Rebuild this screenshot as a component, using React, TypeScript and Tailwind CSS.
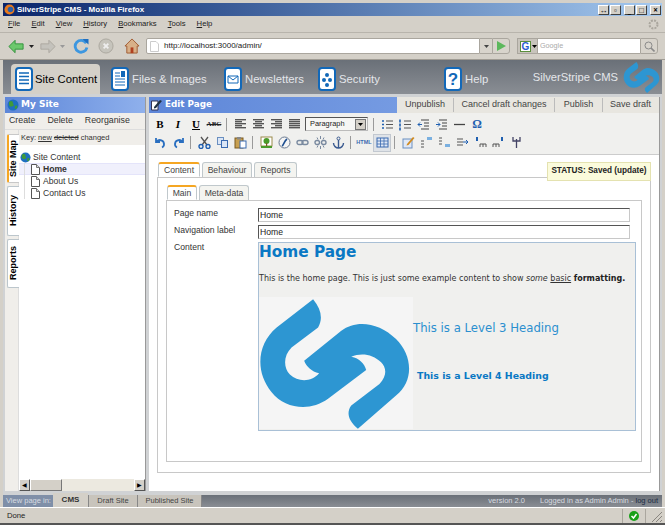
import React from "react";

const chrome = { fontFamily: '"Noto Sans", "Liberation Sans", sans-serif' };
const arial = { fontFamily: '"Liberation Sans", Arial, sans-serif' };
const dejavu = { fontFamily: '"DejaVu Sans", Verdana, sans-serif' };

const LOGO =
  "M190 45C215 75 220 105 205 130L125 190C100 215 100 250 120 272C145 295 185 295 208 268C185 262 170 248 163 230L275 140C320 105 390 115 440 165C490 215 495 290 440 335L325 435C295 410 290 385 305 365L390 300C415 275 410 250 395 235C370 210 335 205 305 218C330 222 345 240 350 258L235 345C180 385 105 375 65 325C15 265 20 180 80 130Z";

const Logo = ({ w, h, box }: { w: number; h: number; box: string }) => (
  <svg width={w} height={h} viewBox={box} className="shrink-0">
    <path d={LOGO} fill="#2d96d2" />
  </svg>
);

const WinBtn = ({ children }: { children: React.ReactNode }) => (
  <div className="w-[11px] h-[10px] bg-[#d4d0c8] border border-t-white border-l-white border-r-[#404040] border-b-[#404040] flex items-center justify-center text-[8px] leading-none font-bold text-black">
    {children}
  </div>
);

const DocIcon = ({ lines }: { lines: React.ReactNode }) => (
  <svg width="18" height="24" viewBox="0 0 18 24" className="shrink-0">
    <rect x="1" y="1" width="16" height="22" rx="3" fill="#fff" stroke="#1268b8" strokeWidth="2" />
    {lines}
  </svg>
);

const TopTab = ({ label, icon, w }: { label: string; icon: React.ReactNode; w: string }) => (
  <div className={`flex items-center gap-[3px] h-[30px] pl-[11px] text-[11.3px] text-[#e4e6ea] whitespace-nowrap ${w}`} style={arial}>
    {icon}
    <span>{label}</span>
  </div>
);

const SideTab = ({ label, on, h }: { label: string; on?: boolean; h: string }) => (
  <div
    className={`w-[12px] ${h} mb-[3px] flex items-center justify-center rounded-l-[2px] border border-r-0 ${
      on ? "bg-white border-l-2 border-l-[#f5a623] border-[#c8c8c8]" : "bg-white border-[#bcc6cc]"
    }`}
  >
    <span className="[writing-mode:vertical-rl] rotate-180 text-[9px] font-bold text-black whitespace-nowrap" style={arial}>
      {label}
    </span>
  </div>
);

const PageIcon = () => (
  <svg width="9" height="11" viewBox="0 0 9 11" className="shrink-0">
    <path d="M.5.5H5.5L8.5 3.5V10.5H.5Z" fill="#fff" stroke="#555" />
    <path d="M5.5.5V3.5H8.5" fill="#ddd" stroke="#777" />
  </svg>
);

const TreeRow = ({ label, on }: { label: string; on?: boolean }) => (
  <div className={`h-[12px] flex items-center pl-[5px] ${on ? "bg-[#f0f0fc] border-y border-[#e4e4fa]" : ""}`}>
    <span className="w-[1px] h-[12px] bg-[#ddd]" />
    <span className="w-[15px] flex justify-end">
      <PageIcon />
    </span>
    <span className={`ml-[3px] text-[8.6px] text-[#333] ${on ? "font-bold" : ""}`} style={arial}>
      {label}
    </span>
  </div>
);

const PanelHeader = ({ icon, label }: { icon: React.ReactNode; label: string }) => (
  <div className="h-[16px] flex items-center gap-[2px] pl-[2px] bg-gradient-to-r from-[#5d86d8] to-[#8fb0ec] text-white text-[9px] font-bold" style={dejavu}>
    {icon}
    <span>{label}</span>
  </div>
);

const Globe = ({ size = 11 }: { size?: number }) => (
  <svg width={size} height={size} viewBox="0 0 12 12" className="shrink-0">
    <circle cx="6" cy="6" r="5.5" fill="#1f6fc0" />
    <path d="M2 3C4 1 6 2 6 4S8 6 6 7 3 8 2 6ZM8 7C10 6 11 7 10 9S7 10 8 7Z" fill="#3f9a3a" />
  </svg>
);

const ToolBtn = ({ children, on }: { children: React.ReactNode; on?: boolean }) => (
  <div className={`w-[18px] h-[18px] shrink-0 flex items-center justify-center ${on ? "bg-[#dfe3e8] border border-[#c2c8d0]" : ""}`}>
    {children}
  </div>
);

const Sep = () => <div className="w-[1px] h-[13px] bg-[#9a9a9a] ml-[3px] mr-[4px] shrink-0" />;

const Lines = ({ kind }: { kind: "l" | "c" | "r" | "f" }) => {
  const rows = [0, 1, 2, 3, 4];
  return (
    <svg width="11" height="10" viewBox="0 0 11 10">
      {rows.map((i) => {
        const short = i % 2 === 1 && kind !== "f";
        const w = short ? 7 : 11;
        const x = kind === "r" ? 11 - w : kind === "c" ? (11 - w) / 2 : 0;
        return <rect key={i} x={x} y={i * 2} width={w} height="1.4" fill="#555" />;
      })}
    </svg>
  );
};

const Ic = ({ children }: { children: React.ReactNode }) => (
  <svg width="13" height="13" viewBox="0 0 13 13" fill="none">
    {children}
  </svg>
);

const FormRow = ({ label, value }: { label: string; value: string }) => (
  <div className="flex h-[14px] mb-[3px]">
    <div className="w-[84px] text-[8.6px] text-[#333] leading-[11px]" style={arial}>
      {label}
    </div>
    <div className="w-[372px] h-[14px] bg-white border border-[#c8c8c8] border-t-[#555] border-l-[#555] text-[8.6px] text-[#222] leading-[13px] pl-[1px]" style={arial}>
      {value}
    </div>
  </div>
);

const MainTab = ({ label, w, on, h }: { label: string; w: string; on?: boolean; h: string }) => (
  <div
    className={`${w} ${h} mr-[2px] flex items-center justify-center text-[8.6px] text-[#444] rounded-t-[3px] border border-[#c0c8cc] ${
      on ? "bg-white border-t-2 border-t-[#f5a623] border-b-white -mb-[1px]" : "bg-[#f4f4f0] border-b-0"
    }`}
    style={arial}
  >
    {label}
  </div>
);

const Caret = ({ color }: { color: string }) => (
  <svg width="5" height="3" viewBox="0 0 5 3" className="shrink-0">
    <path d="M0 0h5L2.5 3Z" fill={color} />
  </svg>
);

export default function App() {
  return (
    <div className="w-[665px] h-[525px] flex flex-col bg-[#d4d0c8] overflow-hidden border-b-2 border-[#555]" style={chrome}>
      {/* title bar */}
      <div className="mt-[3px] mx-[3px] h-[13px] shrink-0 flex items-center bg-gradient-to-r from-[#0a246a] to-[#a6caf0] pl-[1px] pr-[1px] gap-[2px]">
        <svg width="11" height="11" viewBox="0 0 12 12" className="shrink-0">
          <circle cx="6" cy="6" r="5.5" fill="#e8791c" />
          <circle cx="7" cy="6" r="3" fill="#2d5fa8" />
        </svg>
        <span className="text-[8px] font-bold text-white whitespace-nowrap" style={arial}>SilverStripe CMS - Mozilla Firefox</span>
        <div className="ml-auto flex gap-[1px]">
          <WinBtn>↔</WinBtn>
          <WinBtn>▫</WinBtn>
          <div className="w-[1px]" />
          <WinBtn>_</WinBtn>
          <WinBtn>□</WinBtn>
          <div className="w-[1px]" />
          <WinBtn>×</WinBtn>
        </div>
      </div>

      {/* menu */}
      <div className="h-[17px] shrink-0 flex items-center pl-[8px] pr-[6px] gap-[11px] text-[7.7px] text-[#222] border-b border-[#b8b4ac]" style={arial}>
        {["File", "Edit", "View", "History", "Bookmarks", "Tools", "Help"].map((m) => (
          <span key={m}>
            <span className="underline">{m[0]}</span>
            {m.slice(1)}
          </span>
        ))}
        <svg width="11" height="11" viewBox="0 0 11 11" className="ml-auto">
          <circle cx="5.5" cy="5.5" r="4" fill="none" stroke="#aaa69e" strokeWidth="2" strokeDasharray="2 1.15" />
        </svg>
      </div>

      {/* nav toolbar */}
      <div className="h-[27px] shrink-0 flex items-center pl-[8px] border-b border-[#a09c94]">
        <svg width="16" height="15" viewBox="0 0 18 16" className="shrink-0">
          <path d="M8 1 1 8l7 7v-4h9V5H8Z" fill="#6cc86c" stroke="#2f8f3a" />
        </svg>
        <span className="ml-[5px]"><Caret color="#222" /></span>
        <svg width="16" height="15" viewBox="0 0 18 16" className="ml-[6px] shrink-0">
          <path d="M10 1l7 7-7 7v-4H1V5h9Z" fill="#c4c2bc" stroke="#aaa69e" />
        </svg>
        <span className="ml-[4px]"><Caret color="#999" /></span>
        <svg width="16" height="16" viewBox="0 0 17 17" className="ml-[8px] shrink-0">
          <path d="M14 5.5A6.3 6.3 0 1 0 14.8 10" fill="none" stroke="#3d97e0" strokeWidth="3" />
          <path d="M10 1h6.5v6Z" fill="#1f6fc0" />
        </svg>
        <svg width="16" height="16" viewBox="0 0 17 17" className="ml-[9px] shrink-0">
          <circle cx="8.5" cy="8.5" r="7.5" fill="#c6c4bc" stroke="#aaa69e" />
          <path d="M6 6l5 5M11 6l-5 5" stroke="#eee" strokeWidth="2" />
        </svg>
        <svg width="16" height="16" viewBox="0 0 17 17" className="ml-[10px] shrink-0">
          <path d="M8.5 1 1 8.5h2V16h11V8.5h2Z" fill="#d8b088" stroke="#a05a30" />
          <rect x="7" y="10" width="3" height="6" fill="#b04020" />
        </svg>
        <div className="ml-[6px] w-[334px] h-[16px] flex items-center bg-white border border-[#aaa69e] rounded-l-[2px] pl-[3px] shrink-0">
          <svg width="9" height="11" viewBox="0 0 9 11" className="shrink-0">
            <path d="M.5.5H6L8.5 3V10.5H.5Z" fill="#fff" stroke="#ccc" />
          </svg>
          <span className="ml-[5px] text-[8px] text-[#222]" style={arial}>http://localhost:3000/admin/</span>
        </div>
        <div className="w-[12px] h-[16px] bg-[#d8d4cc] border-y border-[#aaa69e] flex items-center justify-center shrink-0"><Caret color="#444" /></div>
        <div className="w-[18px] h-[16px] bg-[#d8d4cc] border border-[#aaa69e] rounded-r-[3px] flex items-center justify-center shrink-0">
          <svg width="9" height="10" viewBox="0 0 9 10"><path d="M0 0 9 5 0 10Z" fill="#5cb85c" /></svg>
        </div>
        <div className="ml-[7px] w-[21px] h-[16px] bg-[#c8c4bc] border border-[#aaa69e] flex items-center pl-[2px] gap-[1px] shrink-0">
          <span className="w-[11px] h-[11px] bg-white border border-[#5a8f3c] text-[10px] leading-[10px] font-bold text-[#2a5ad0] text-center" style={arial}>G</span>
          <Caret color="#000" />
        </div>
        <div className="w-[102px] h-[16px] bg-white border-y border-[#aaa69e] text-[7.2px] text-[#aaa] leading-[14px] pl-[2px] shrink-0" style={arial}>Google</div>
        <div className="w-[18px] h-[16px] bg-[#d8d4cc] border border-[#aaa69e] rounded-r-[3px] flex items-center justify-center shrink-0">
          <svg width="11" height="11" viewBox="0 0 11 11" fill="none"><circle cx="4.5" cy="4.5" r="3.5" stroke="#8a8a8a" /><path d="M7 7l3.5 3.5" stroke="#8a8a8a" strokeWidth="1.6" /></svg>
        </div>
      </div>

      {/* cms page */}
      <div className="flex-1 min-h-0 flex flex-col mx-[3px] bg-[#d0d2d4]">
        {/* tabs */}
        <div className="h-[34px] shrink-0 flex items-end pl-[8px] pr-[2px] bg-gradient-to-b from-[#6a7078] to-[#8a8e94]">
          <div className="w-[89px] h-[30px] flex items-center gap-[2px] pl-[4px] bg-[#d4d0c8] rounded-t-[4px] text-[11.3px] text-black whitespace-nowrap" style={arial}>
            <DocIcon lines={<path d="M4 6h10M4 9.5h10M4 13h10M4 16.5h10" stroke="#1268b8" strokeWidth="1.4" />} />
            <span>Site Content</span>
          </div>
          <TopTab label="Files & Images" w="w-[113px]" icon={<DocIcon lines={<><path d="M4 6h5M4 9h5M4 12h10M4 15h10M4 18h10" stroke="#1268b8" /><rect x="10" y="4" width="4" height="6" fill="#1268b8" /></>} />} />
          <TopTab label="Newsletters" w="w-[94px]" icon={<DocIcon lines={<path d="M4 9h10v7H4ZM4 9l5 4 5-4" fill="none" stroke="#1268b8" />} />} />
          <TopTab label="Security" w="w-[126px]" icon={<DocIcon lines={<><circle cx="9" cy="8" r="2" fill="#1268b8" /><circle cx="6" cy="13" r="2" fill="#1268b8" /><circle cx="12" cy="13" r="2" fill="#1268b8" /><circle cx="9" cy="18" r="2" fill="#1268b8" /></>} />} />
          <div className="flex items-center gap-[3px] h-[30px] pl-[11px] text-[11.3px] text-[#e4e6ea]" style={arial}>
            <svg width="18" height="24" viewBox="0 0 18 24" className="shrink-0">
              <rect x="1" y="1" width="16" height="22" rx="3" fill="#fff" stroke="#1268b8" strokeWidth="2" />
              <text x="9" y="18" textAnchor="middle" fontSize="17" fontWeight="700" fill="#1268b8" fontFamily="Liberation Sans">?</text>
            </svg>
            <span>Help</span>
          </div>
          <div className="ml-auto h-[33px] flex items-center gap-[5px]">
            <span className="text-[11.2px] text-[#e4e6ea] whitespace-nowrap" style={arial}>SilverStripe CMS</span>
            <Logo w={37} h={31} box="25 45 460 390" />
          </div>
        </div>

        {/* panels */}
        <div className="flex-1 min-h-0 flex pt-[3px] pl-[2px] pr-[2px] gap-[3px]">
          {/* left */}
          <div className="w-[141px] shrink-0 flex flex-col bg-white border-r border-[#999]">
            <PanelHeader icon={<Globe size={12} />} label="My Site" />
            <div className="h-[17px] shrink-0 flex items-center pl-[4px] gap-[12px] text-[8.8px] text-[#333] bg-[#f0eeea] border-b border-[#ddd]" style={arial}>
              <span>Create</span>
              <span>Delete</span>
              <span>Reorganise</span>
            </div>
            <div className="flex-1 min-h-0 flex">
              <div className="w-[14px] shrink-0 bg-[#f0eeea] pt-[4px] pl-[2px] border-r border-[#ddd]">
                <SideTab label="Site Map" on h="h-[49px]" />
                <SideTab label="History" h="h-[50px]" />
                <SideTab label="Reports" h="h-[49px]" />
              </div>
              <div className="flex-1 min-w-0 flex flex-col">
                <div className="h-[15px] flex items-center pl-[2px] text-[7.5px] text-[#333] bg-[#f0eeea] whitespace-nowrap" style={arial}>
                  Key:&nbsp;<span className="underline">new</span>&nbsp;<span className="line-through">deleted</span>&nbsp;changed
                </div>
                <div className="flex-1 pt-[6px]">
                  <div className="h-[12px] flex items-center pl-[1px] gap-[2px] text-[8.6px] text-[#333]" style={arial}>
                    <Globe />
                    Site Content
                  </div>
                  <TreeRow label="Home" on />
                  <TreeRow label="About Us" />
                  <TreeRow label="Contact Us" />
                </div>
                <div className="h-[12px] flex bg-[#ece9e0]">
                  <div className="w-[11px] bg-[#d4d0c8] border border-t-white border-l-white border-r-[#555] border-b-[#555] text-[6px] leading-[10px] text-center text-black">◀</div>
                  <div className="w-[32px] bg-[#d4d0c8] border border-t-white border-l-white border-r-[#777] border-b-[#777]" />
                  <div className="flex-1" />
                  <div className="w-[11px] bg-[#d4d0c8] border border-t-white border-l-white border-r-[#555] border-b-[#555] text-[6px] leading-[10px] text-center text-black">▶</div>
                </div>
              </div>
            </div>
          </div>

          {/* right */}
          <div className="flex-1 min-w-0 flex flex-col bg-white border-r border-[#999]">
            <div className="h-[16px] shrink-0 flex items-center bg-gradient-to-r from-[#5d86d8] to-[#8fb0ec]">
              <div className="flex-1 flex items-center gap-[3px] pl-[2px] text-white text-[8.8px] font-bold" style={dejavu}>
                <svg width="11" height="12" viewBox="0 0 11 12" className="shrink-0">
                  <path d="M.5 2H7V11H.5Z" fill="#fff" stroke="#335" />
                  <path d="M3 8l6-7 2 1-6 7-2 .5Z" fill="#234" />
                </svg>
                Edit Page
              </div>
              <div className="w-[262px] h-[16px] flex items-center bg-[#e8e6e0] text-[9px] text-[#444] whitespace-nowrap" style={arial}>
                <span className="w-[57px] text-center border-r border-[#bbb]">Unpublish</span>
                <span className="w-[101px] text-center border-r border-[#bbb]">Cancel draft changes</span>
                <span className="w-[48px] text-center border-r border-[#bbb]">Publish</span>
                <span className="w-[55px] text-center">Save draft</span>
              </div>
            </div>

            <div className="h-[42px] shrink-0 bg-[#f0f0ee] border-b border-[#ccc] pl-[2px] pt-[2px]">
              <div className="h-[18px] flex items-center">
                <ToolBtn><span className="text-[11px] font-bold text-black" style={{ fontFamily: '"Liberation Serif", serif' }}>B</span></ToolBtn>
                <ToolBtn><span className="text-[11px] font-bold italic text-black" style={{ fontFamily: '"Liberation Serif", serif' }}>I</span></ToolBtn>
                <ToolBtn><span className="text-[11px] font-bold underline text-black" style={{ fontFamily: '"Liberation Serif", serif' }}>U</span></ToolBtn>
                <ToolBtn><span className="text-[7px] font-bold line-through text-[#222]" style={{ fontFamily: '"Liberation Serif", serif' }}>ABC</span></ToolBtn>
                <Sep />
                <ToolBtn><Lines kind="l" /></ToolBtn>
                <ToolBtn><Lines kind="c" /></ToolBtn>
                <ToolBtn><Lines kind="r" /></ToolBtn>
                <ToolBtn><Lines kind="f" /></ToolBtn>
                <div className="ml-[2px] w-[63px] h-[14px] flex items-center justify-between bg-[#f6f6f4] border border-[#555] border-r-[#bbb] border-b-[#bbb] pl-[4px] text-[7.4px] text-[#222] shrink-0" style={arial}>
                  Paragraph
                  <span className="w-[11px] h-[11px] mr-[1px] bg-[#d4d0c8] border border-[#777] flex items-center justify-center"><Caret color="#000" /></span>
                </div>
                <div className="w-[2px] shrink-0" />
                <Sep />
                <ToolBtn>
                  <Ic><path d="M1 3h2M1 6.5h2M1 10h2" stroke="#1f5fb0" strokeWidth="1.6" /><path d="M5 3h7M5 6.5h7M5 10h7" stroke="#555" strokeWidth="1.2" /></Ic>
                </ToolBtn>
                <ToolBtn>
                  <Ic><path d="M1 1.5v3M1 5.5v3M1 9.5v3" stroke="#1f5fb0" strokeWidth="1.6" /><path d="M5 3h7M5 6.5h7M5 10h7" stroke="#555" strokeWidth="1.2" /></Ic>
                </ToolBtn>
                <ToolBtn>
                  <Ic><path d="M4 2h8M7 5h5M7 8h5M4 11h8" stroke="#444" strokeWidth="1.2" /><path d="M5 6.5H1M3 4.5l-2 2 2 2" stroke="#1f5fb0" /></Ic>
                </ToolBtn>
                <ToolBtn>
                  <Ic><path d="M4 2h8M7 5h5M7 8h5M4 11h8" stroke="#444" strokeWidth="1.2" /><path d="M1 6.5h4M3 4.5l2 2-2 2" stroke="#1f5fb0" /></Ic>
                </ToolBtn>
                <ToolBtn><Ic><path d="M1 6.5h11" stroke="#444" strokeWidth="1.3" /></Ic></ToolBtn>
                <ToolBtn><span className="text-[12px] font-bold text-[#1f5fb0]" style={{ fontFamily: '"Liberation Serif", serif' }}>Ω</span></ToolBtn>
              </div>
              <div className="h-[19px] flex items-center">
                <ToolBtn><Ic><path d="M2 2v4h4M2.5 6C5 2.5 10.5 4 10 9c-.2 1-1 2-2 2.5" stroke="#2a6fc0" strokeWidth="1.8" /></Ic></ToolBtn>
                <ToolBtn><Ic><path d="M11 2v4H7M10.5 6C8 2.5 2.5 4 3 9c.2 1 1 2 2 2.5" stroke="#2a6fc0" strokeWidth="1.8" /></Ic></ToolBtn>
                <Sep />
                <ToolBtn><Ic><path d="M3 1l6 8M10 1 4 9" stroke="#555" strokeWidth="1.3" /><circle cx="3" cy="10.5" r="2" stroke="#1f5fb0" strokeWidth="1.4" /><circle cx="10" cy="10.5" r="2" stroke="#1f5fb0" strokeWidth="1.4" /></Ic></ToolBtn>
                <ToolBtn><Ic><rect x="1.5" y="1.5" width="6" height="7" fill="#dbe6f6" stroke="#6a8fc0" /><rect x="5.5" y="4.5" width="6" height="7" fill="#dbe6f6" stroke="#3a6ab0" /></Ic></ToolBtn>
                <ToolBtn><Ic><rect x="1" y="2" width="8" height="10" fill="#c8a050" stroke="#7a5a20" /><rect x="3" y="1" width="4" height="2.5" fill="#888" /><rect x="6" y="5" width="6" height="7" fill="#fff" stroke="#3a6ab0" /></Ic></ToolBtn>
                <Sep />
                <ToolBtn><Ic><rect x="1" y="1" width="11" height="9" fill="#fff" stroke="#9a8a4a" /><circle cx="6.5" cy="5" r="3" fill="#4a9a2a" /><rect x="6" y="7" width="1.2" height="3" fill="#7a5a20" /><rect x="1" y="10" width="11" height="2" fill="#4a9a2a" /></Ic></ToolBtn>
                <ToolBtn><Ic><circle cx="6.5" cy="6.5" r="5.5" fill="#f4f4f4" stroke="#6a7a90" /><path d="M4 10C6 9 6 5 9 3" stroke="#1f4f90" strokeWidth="1.6" /></Ic></ToolBtn>
                <ToolBtn><Ic><rect x="1" y="4.5" width="6" height="4" rx="2" stroke="#7a8aa0" strokeWidth="1.4" /><rect x="6" y="4.5" width="6" height="4" rx="2" stroke="#7a8aa0" strokeWidth="1.4" /></Ic></ToolBtn>
                <ToolBtn><Ic><rect x="1" y="4.5" width="4.5" height="4" rx="2" stroke="#7a8aa0" strokeWidth="1.4" /><rect x="7.5" y="4.5" width="4.5" height="4" rx="2" stroke="#7a8aa0" strokeWidth="1.4" /><path d="M6.5 0v3M6.5 10v3M3 1.5l1 2M10 1.5l-1 2M3 11.5l1-2M10 11.5l-1-2" stroke="#7a8aa0" /></Ic></ToolBtn>
                <ToolBtn><Ic><circle cx="6.5" cy="2.5" r="1.5" stroke="#3a5a90" /><path d="M6.5 4v8M1.5 7c0 3 2.5 5 5 5s5-2 5-5" stroke="#3a5a90" strokeWidth="1.4" /></Ic></ToolBtn>
                <Sep />
                <ToolBtn><span className="text-[5.5px] font-bold text-[#3a6ab0]" style={arial}>HTML</span></ToolBtn>
                <ToolBtn on><Ic><rect x="1" y="2" width="11" height="9" fill="#dfe8f6" stroke="#3a6ab0" /><path d="M1 5h11M1 8h11M4.5 2v9M8 2v9" stroke="#3a6ab0" strokeWidth=".8" /></Ic></ToolBtn>
                <Sep />
                <ToolBtn><Ic><rect x="1" y="3" width="9" height="9" fill="#dfe8f6" stroke="#6a8fc0" /><path d="M5 8 11 1l1.5 1-6 7-2 .5Z" fill="#d08a20" /></Ic></ToolBtn>
                <ToolBtn><Ic><path d="M1 5h3M1 8h3M1 11h3" stroke="#555" strokeWidth="1.2" /><rect x="7" y="1" width="5" height="3" fill="#7ab0e0" /></Ic></ToolBtn>
                <ToolBtn><Ic><path d="M1 2h3M1 5h3M1 8h3" stroke="#555" strokeWidth="1.2" /><rect x="7" y="8" width="5" height="3" fill="#7ab0e0" /></Ic></ToolBtn>
                <ToolBtn><Ic><path d="M1 3h6M1 6h6M1 9h6" stroke="#555" strokeWidth="1.2" /><path d="M7 6h5M10 4l2 2-2 2" stroke="#1f5fb0" /></Ic></ToolBtn>
                <ToolBtn><Ic><path d="M3 1v4" stroke="#1f5fb0" strokeWidth="2" /><path d="M6 11V8M9 11V8M12 11V8M6 8h6" stroke="#555" /></Ic></ToolBtn>
                <ToolBtn><Ic><path d="M10 1v4" stroke="#1f5fb0" strokeWidth="2" /><path d="M1 11V8M4 11V8M7 11V8M1 8h6" stroke="#555" /></Ic></ToolBtn>
                <ToolBtn><Ic><path d="M6.5 3v9M3 1v4h7V1" stroke="#446" strokeWidth="1.3" /></Ic></ToolBtn>
              </div>
            </div>

            {/* form */}
            <div className="flex-1 min-h-0 relative px-[8px] pt-[7px] pb-[18px] flex flex-col">
              <div className="absolute right-[8px] top-[7px] w-[104px] h-[19px] bg-[#fbfbdc] border border-[#e4e2b0] flex items-center justify-center text-[8.2px] font-bold text-[#222] whitespace-nowrap" style={arial}>
                STATUS: Saved (update)
              </div>
              <div className="flex h-[15px] shrink-0 pl-[1px]">
                <MainTab label="Content" w="w-[42px]" h="h-[15px]" on />
                <MainTab label="Behaviour" w="w-[50px]" h="h-[15px]" />
                <MainTab label="Reports" w="w-[43px]" h="h-[15px]" />
              </div>
              <div className="flex-1 min-h-0 border border-[#c8c8c8] px-[8px] pt-[7px] pb-[10px] flex flex-col">
                <div className="flex h-[15px] shrink-0 pl-[1px]">
                  <MainTab label="Main" w="w-[30px]" h="h-[15px]" on />
                  <MainTab label="Meta-data" w="w-[50px]" h="h-[15px]" />
                </div>
                <div className="flex-1 min-h-0 border border-[#c8c8c8] pl-[7px] pt-[7px]">
                  <FormRow label="Page name" value="Home" />
                  <FormRow label="Navigation label" value="Home" />
                  <div className="flex mt-[2px]">
                    <div className="w-[84px] text-[8.6px] text-[#333] leading-[11px]" style={arial}>Content</div>
                    <div className="w-[378px] h-[189px] bg-[#f0f0ee] border border-[#a9c0d6] pl-[0px]" style={dejavu}>
                      <div className="text-[15.3px] font-bold text-[#0a78c4] leading-[18px]">Home Page</div>
                      <p className="mt-[12px] text-[8px] text-[#333] leading-[11px] whitespace-nowrap">
                        This is the home page. This is just some example content to show <em>some</em> <span className="underline">basic</span> <strong className="text-[#222]">formatting.</strong>
                      </p>
                      <div className="mt-[13px] flex">
                        <div className="w-[154px] h-[132px] bg-[#f5f5f5] flex shrink-0">
                          <Logo w={154} h={132} box="28 38 462 398" />
                        </div>
                        <div className="flex flex-col">
                          <div className="mt-[24px] text-[11.7px] text-[#2b8fcf] leading-[15px] whitespace-nowrap">This is a Level 3 Heading</div>
                          <div className="mt-[34px] ml-[4px] text-[9.4px] font-bold text-[#0a78c4] leading-[12px] whitespace-nowrap">This is a Level 4 Heading</div>
                        </div>
                      </div>
                    </div>
                  </div>
                </div>
              </div>
            </div>
          </div>
        </div>

        {/* bottom bar */}
        <div className="h-[12px] shrink-0 mt-[4px] flex items-center bg-gradient-to-b from-[#6a7078] to-[#8a8e94] text-[7.5px] text-[#d8dce0] whitespace-nowrap" style={arial}>
          <div className="h-full flex items-center w-[50px] pl-[3px] bg-[#7f8fa8]">View page in:</div>
          <div className="w-[35px] h-[14px] -mt-[2px] flex items-center justify-center bg-[#d4d0c8] text-[8px] font-bold text-[#333]">CMS</div>
          <div className="w-[49px] h-full flex items-center justify-center bg-[#c8c4bc] border-l border-[#888] text-[#444]">Draft Site</div>
          <div className="w-[65px] h-full flex items-center justify-center bg-[#c8c4bc] border-x border-[#888] text-[#444]">Published Site</div>
          <span className="ml-auto">version 2.0</span>
          <span className="ml-[15px] mr-[4px]">Logged in as Admin Admin - <span className="text-[#1c2c44]">log out</span></span>
        </div>
      </div>

      {/* status bar */}
      <div className="h-[16px] shrink-0 flex items-center pl-[7px] text-[7.7px] text-[#222] border-t border-white" style={arial}>
        <span>Done</span>
        <div className="ml-auto w-[24px] h-[14px] border-x border-[#aaa69e] flex items-center justify-center">
          <svg width="10" height="10" viewBox="0 0 10 10">
            <circle cx="5" cy="5" r="5" fill="#18a018" />
            <path d="M2.5 5l2 2 3-4" stroke="#fff" strokeWidth="1.5" fill="none" />
          </svg>
        </div>
        <svg width="14" height="14" viewBox="0 0 14 14" className="ml-[3px] mr-[2px]">
          <path d="M13 3 3 13M13 7 7 13M13 11l-2 2" stroke="#8a8680" />
        </svg>
      </div>
    </div>
  );
}
